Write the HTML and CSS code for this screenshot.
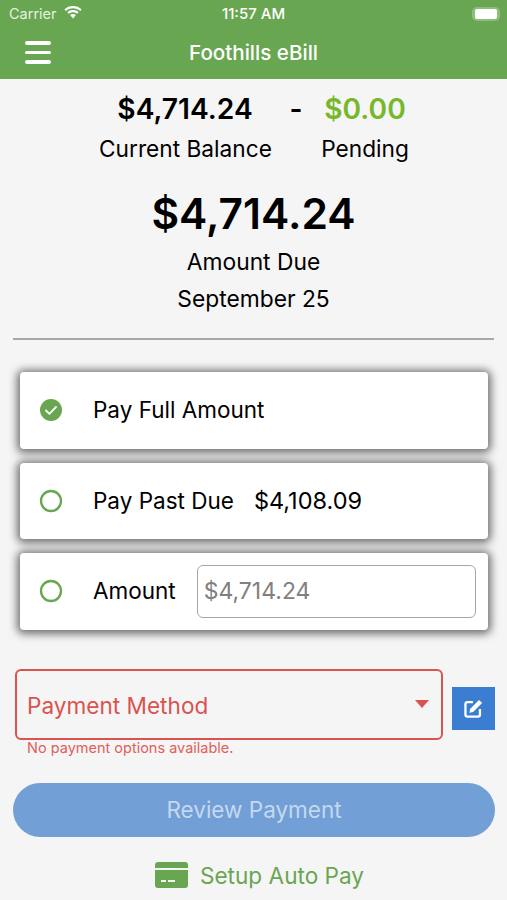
FILE: index.html
```html
<!DOCTYPE html>
<html lang="en">
<head>
<meta charset="utf-8">
<title>Foothills eBill</title>
<link rel="stylesheet" href="styles.css">
</head>
<body>
<header class="header">
  <div class="status">
    <div class="status-left">
      <span>Carrier</span>
      <svg class="wifi" viewBox="0 0 20 15" width="20" height="15"><path d="M10 3.2c2.7 0 5.2 1 7.1 2.8l1.5-1.6C16.300 2.200 13.300 1 10 1S3.700 2.200 1.400 4.400L2.900 6C4.800 4.200 7.300 3.200 10 3.200z" fill="#fff"/><path d="M10 7.200c1.600 0 3 .6 4.200 1.600l1.500-1.600C14.200 5.800 12.200 5 10 5s-4.200.8-5.700 2.200l1.500 1.600C7 7.800 8.400 7.200 10 7.200z" fill="#fff"/><path d="M10 9c-1.100 0-2.100.4-2.900 1.100L10 13.400l2.900-3.300C12.100 9.400 11.100 9 10 9z" fill="#fff"/></svg>
    </div>
    <span class="clock">11:57 AM</span>
    <div class="battery"><span class="battery-fill"></span></div>
  </div>
  <div class="nav">
    <div class="burger"><span></span><span></span><span></span></div>
    <div class="title">Foothills eBill</div>
  </div>
</header>
<main class="main">
  <div class="balance">
    <div class="bal-col bal-current">
      <div class="amount">$4,714.24</div>
      <div class="label">Current Balance</div>
    </div>
    <div class="minus">-</div>
    <div class="bal-col bal-pending">
      <div class="amount green">$0.00</div>
      <div class="label">Pending</div>
    </div>
  </div>
  <div class="due">
    <div class="due-amount">$4,714.24</div>
    <div class="due-label">Amount Due</div>
    <div class="due-label">September 25</div>
  </div>
  <hr class="rule">
  <div class="options">
    <div class="card">
      <svg class="radio" viewBox="0 0 24 24" width="24" height="24"><circle cx="12" cy="12" r="11" fill="#69a651"/><path d="M7 12.500l3.400 3.300L17 9" fill="none" stroke="#fff" stroke-width="1.800" stroke-linecap="round" stroke-linejoin="round"/></svg>
      <span class="opt-text">Pay Full Amount</span>
    </div>
    <div class="card">
      <svg class="radio" viewBox="0 0 24 24" width="24" height="24"><circle cx="12" cy="12" r="10" fill="none" stroke="#69a651" stroke-width="2.300"/></svg>
      <span class="opt-text">Pay Past Due</span>
      <span class="opt-value">$4,108.09</span>
    </div>
    <div class="card">
      <svg class="radio" viewBox="0 0 24 24" width="24" height="24"><circle cx="12" cy="12" r="10" fill="none" stroke="#69a651" stroke-width="2.300"/></svg>
      <span class="opt-text">Amount</span>
      <div class="input">$4,714.24</div>
    </div>
  </div>
  <div class="method-row">
    <div class="select">
      <span class="select-text">Payment Method</span>
      <span class="caret"></span>
    </div>
    <div class="edit">
      <svg viewBox="0 0 20 20" width="23" height="23"><path d="M9.500 4.500H4.800A1.800 1.800 0 0 0 3 6.300v9A1.800 1.800 0 0 0 4.800 17h9a1.800 1.800 0 0 0 1.800-1.800v-4.700" fill="none" stroke="#fff" stroke-width="2"/><path d="M14.800 2.600l2.700 2.700-7.800 7.800-3.200.5.500-3.200z" fill="#fff"/></svg>
    </div>
  </div>
  <div class="error">No payment options available.</div>
  <div class="review">Review Payment</div>
  <div class="autopay">
    <svg viewBox="0 0 33 26" width="33" height="26"><path d="M3 0h27a3 3 0 0 1 3 3v3H0V3a3 3 0 0 1 3-3z" fill="#69a651"/><path d="M0 8h33v15a3 3 0 0 1-3 3H3a3 3 0 0 1-3-3z" fill="#69a651"/><rect x="6" y="18" width="5" height="2" fill="#f5f5f5"/><rect x="13" y="18" width="7" height="2" fill="#f5f5f5"/></svg>
    <span>Setup Auto Pay</span>
  </div>
</main>
</body>
</html>
```
FILE: styles.css
```css
* { box-sizing: border-box; }
html, body { margin: 0; padding: 0; }
body {
  width: 507px;
  height: 900px;
  overflow: hidden;
  background: #f5f5f5;
  color: #000;
  font-family: Inter, "Liberation Sans", sans-serif;
}
.header { height: 79px; background: #69a651; color: #fff; }
.status {
  height: 27px;
  padding: 0 7px 0 9px;
  display: flex;
  align-items: center;
  justify-content: space-between;
  position: relative;
  font-size: 14.500px;
}
.status-left { display: flex; align-items: center; gap: 6px; color: #e6f0e0; }
.wifi { margin-top: -3px; }
.clock { position: absolute; left: 0; right: 0; text-align: center; font-weight: 500; font-size: 15px; }
.battery {
  width: 28px;
  height: 14px;
  padding: 2px 3px;
  border-radius: 5px;
  background: #8fbd7c;
}
.battery-fill { display: block; width: 100%; height: 100%; background: #fff; border-radius: 2px; }
.nav { height: 52px; position: relative; display: flex; align-items: center; justify-content: center; margin-top: -1px; }
.burger { position: absolute; left: 25px; top: 15px; width: 26px; display: flex; flex-direction: column; gap: 6px; }
.burger span { display: block; height: 3.500px; background: #fff; border-radius: 2px; }
.title { font-size: 20.600px; font-weight: 500; }
.balance { display: flex; padding-top: 14px; height: 86px; white-space: nowrap; }
.bal-col { text-align: center; }
.bal-current { width: 172px; margin-left: 99px; }
.bal-pending { width: 88px; }
.minus { width: 50px; text-align: center; font-size: 28px; font-weight: 600; line-height: 32px; }
.amount { font-size: 28.200px; font-weight: 600; line-height: 32px; }
.green { color: #76b82a; }
.label { font-size: 22.700px; line-height: 30px; margin-top: 9px; }
.due { text-align: center; }
.due-amount { font-size: 42.500px; font-weight: 600; line-height: 48px; margin-top: 25px; }
.due-label { font-size: 22.800px; line-height: 37px; }
.due-amount + .due-label { margin-top: 5px; }
.rule { margin: 21px 13px 0; height: 2px; border: 0; background: #a8a8a8; }
.options { padding: 32px 19px 0 20px; display: flex; flex-direction: column; gap: 14px; }
.card {
  height: 76.500px;
  background: #fff;
  border-radius: 4px;
  box-shadow: 0 1px 9px 3px rgba(0, 0, 0, 0.55);
  display: flex;
  align-items: center;
  padding: 0 12px 0 19px;
  font-size: 22.500px;
}
.radio { flex: none; margin-right: 30px; }
.opt-text { white-space: nowrap; margin-top: -1px; }
.opt-value { margin-left: 20px; margin-top: -1px; font-size: 23.500px; }
.input {
  flex: 1;
  height: 53px;
  margin-left: 21px;
  border: 1px solid #a6a6a6;
  border-radius: 6px;
  padding: 0 6px;
  display: flex;
  align-items: center;
  color: #808080;
  font-size: 23px;
}
.method-row { display: flex; padding: 39px 12px 0 15px; gap: 9px; }
.select {
  width: 428px;
  height: 71px;
  border: 2px solid #d9534f;
  border-radius: 6px;
  display: flex;
  align-items: center;
  justify-content: space-between;
  padding: 0 12px 0 10px;
  color: #d9534f;
  font-size: 22.600px;
}
.select-text { margin-top: 2px; }
.caret { width: 0; height: 0; border-left: 7.500px solid transparent; border-right: 7.500px solid transparent; border-top: 8px solid #d9534f; }
.edit { width: 43px; height: 43px; margin-top: 18px; background: #3b7dd0; display: flex; align-items: center; justify-content: center; }
.error { color: #e0605c; font-size: 14.500px; line-height: 18px; padding-left: 27px; margin-top: -1px; }
.review {
  margin: 26px 12px 0 13px;
  height: 54px;
  border-radius: 27px;
  background: #719fd6;
  color: #c5d8ef;
  font-size: 22.500px;
  display: flex;
  align-items: center;
  justify-content: center;
}
.autopay { display: flex; align-items: center; justify-content: center; gap: 12px; margin-top: 25px; padding-left: 12px; color: #69a651; font-size: 22.600px; }
```
